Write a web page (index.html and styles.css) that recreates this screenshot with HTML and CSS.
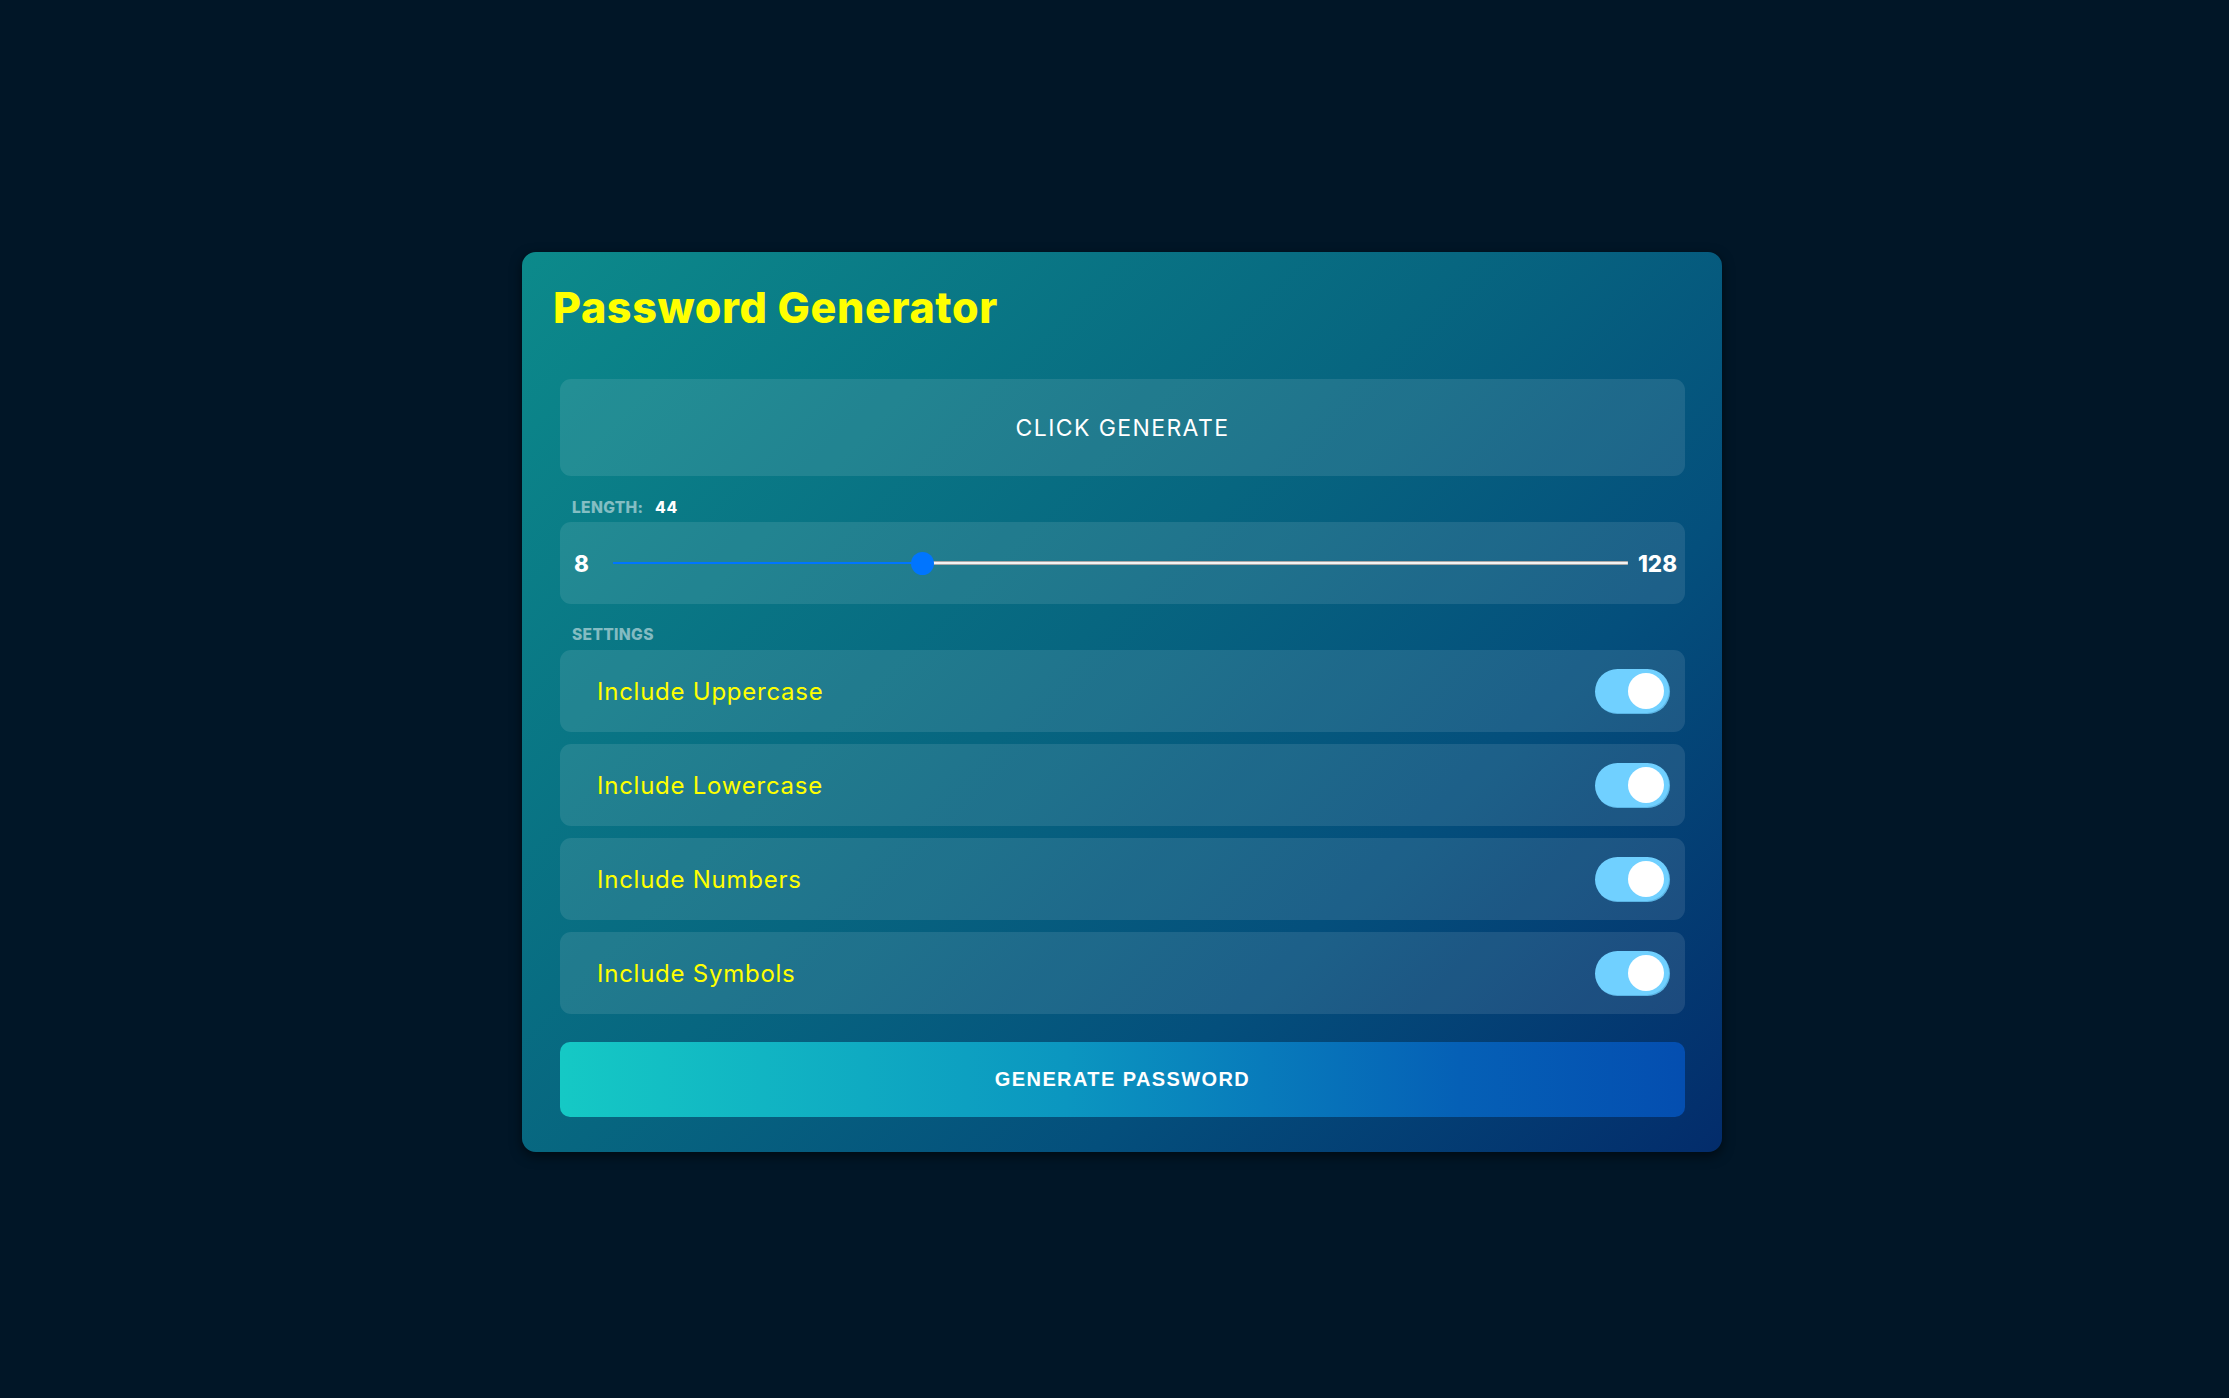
FILE: index.html
```html
<!DOCTYPE html>
<html lang="en">
<head>
<meta charset="utf-8">
<title>Password Generator</title>
<link rel="stylesheet" href="styles.css">
</head>
<body>
<div class="page">
  <main class="card">
    <h1 class="title">Password Generator</h1>
    <div class="content">
      <div class="result"><span class="result-text">CLICK GENERATE</span></div>

      <div class="field-label field-label--length">Length: <span class="field-value">44</span></div>
      <div class="slider-box">
        <span class="slider-num">8</span>
        <input class="range" type="range" min="8" max="128" value="44" style="--p:0.3">
        <span class="slider-num">128</span>
      </div>

      <div class="field-label field-label--settings">Settings</div>
      <div class="settings">
        <div class="setting">
          <span class="setting-label">Include Uppercase</span>
          <span class="toggle" role="switch" aria-checked="true"><span class="knob"></span></span>
        </div>
        <div class="setting">
          <span class="setting-label">Include Lowercase</span>
          <span class="toggle" role="switch" aria-checked="true"><span class="knob"></span></span>
        </div>
        <div class="setting">
          <span class="setting-label">Include Numbers</span>
          <span class="toggle" role="switch" aria-checked="true"><span class="knob"></span></span>
        </div>
        <div class="setting">
          <span class="setting-label">Include Symbols</span>
          <span class="toggle" role="switch" aria-checked="true"><span class="knob"></span></span>
        </div>
      </div>

      <button class="generate" type="button">Generate Password</button>
    </div>
  </main>
</div>
</body>
</html>
```

FILE: styles.css
```css
* {
  box-sizing: border-box;
}

html, body {
  margin: 0;
  padding: 0;
  background: #011627;
  overflow: hidden;
}

body {
  font-family: "Inter", "Liberation Sans", sans-serif;
  color: #ffffff;
}

.page {
  min-height: 100vh;
  display: flex;
  align-items: center;
  justify-content: center;
  padding: 6px 0 0 15px;
}

.card {
  width: 1200px;
  padding: 0 37px 35px 31px;
  border-radius: 14px;
  background: linear-gradient(135deg, #0c8a8b 0%, #076680 45%, #044f7c 70%, #032c6b 100%);
  box-shadow: 0 4px 12px rgba(0, 0, 0, 0.55);
}

.title {
  margin: 34px 0 50.5px 0;
  font-size: 43px;
  line-height: 1;
  font-weight: 800;
  color: #ffff00;
  letter-spacing: 0.65px;
}

.content {
  padding-left: 7px;
}

.result {
  height: 97px;
  border-radius: 11px;
  background: rgba(255, 255, 255, 0.1);
  display: flex;
  align-items: center;
  justify-content: center;
}

.result-text {
  font-size: 23px;
  font-weight: 400;
  letter-spacing: 1.4px;
  color: #ffffff;
}

.field-label {
  height: 19px;
  font-size: 15.6px;
  line-height: 19px;
  font-weight: 800;
  letter-spacing: 0.3px;
  text-transform: uppercase;
  color: rgba(255, 255, 255, 0.5);
  padding-left: 12px;
}

.field-label--length {
  margin: 21.5px 0 5.5px;
}

.field-label--settings {
  margin: 20.8px 0 6.2px;
}

.field-value {
  margin-left: 8px;
  color: #ffffff;
  letter-spacing: 0.8px;
}

.slider-box {
  height: 82px;
  border-radius: 11px;
  background: rgba(255, 255, 255, 0.1);
  display: flex;
  align-items: center;
  padding: 0 8px 0 14px;
}

.slider-num {
  font-size: 22.4px;
  font-weight: 800;
  color: #ffffff;
}

.range {
  -webkit-appearance: none;
  appearance: none;
  flex: 1;
  height: 23px;
  margin: 0 10px 0 24px;
  background: transparent;
  --fill: calc(11.5px + var(--p) * (100% - 23px));
}

.range::-webkit-slider-runnable-track {
  height: 4px;
  background:
    linear-gradient(#0075ff, #0075ff) 0 50% / var(--fill) 2px no-repeat,
    linear-gradient(#a8a8a8 0 1px, #f2f2f2 1px 3px, #a8a8a8 3px 4px) 100% 50% / calc(100% - var(--fill)) 4px no-repeat;
}

.range::-webkit-slider-thumb {
  -webkit-appearance: none;
  appearance: none;
  width: 23px;
  height: 23px;
  margin-top: -9.5px;
  border: none;
  border-radius: 50%;
  background: #0075ff;
}

.settings {
  display: flex;
  flex-direction: column;
  gap: 12px;
}

.setting {
  height: 82px;
  border-radius: 11px;
  background: rgba(255, 255, 255, 0.1);
  display: flex;
  align-items: center;
  justify-content: space-between;
  padding: 0 15px 0 37px;
}

.setting-label {
  font-size: 24px;
  font-weight: 400;
  letter-spacing: 0.75px;
  color: #ffff00;
}

.toggle {
  width: 75px;
  height: 45px;
  border-radius: 23px;
  background: #70d0ff;
  box-shadow: inset -1px -1px 0 rgba(0, 60, 110, 0.18);
  display: flex;
  align-items: center;
  justify-content: flex-end;
  padding-right: 6px;
}

.knob {
  width: 36px;
  height: 36px;
  border-radius: 50%;
  background: #ffffff;
}

.generate {
  display: block;
  width: 100%;
  height: 75px;
  margin-top: 28px;
  border: none;
  border-radius: 10px;
  background: linear-gradient(90deg, #15c9c5 0%, #0b96c0 45%, #0560b6 80%, #044eb0 100%);
  color: #ffffff;
  font-family: "Liberation Sans", Arial, sans-serif;
  font-size: 20px;
  font-weight: 700;
  letter-spacing: 1.4px;
  text-transform: uppercase;
  cursor: pointer;
}
```
